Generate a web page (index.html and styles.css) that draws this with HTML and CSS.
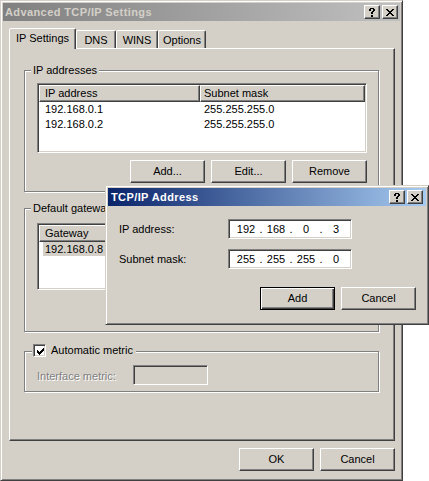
FILE: index.html
```html
<!DOCTYPE html>
<html>
<head>
<meta charset="utf-8">
<title>Advanced TCP/IP Settings</title>
<link rel="stylesheet" href="styles.css">
</head>
<body>
<div class="win main">
  <div class="titlebar inactive">
    <span class="title">Advanced TCP/IP Settings</span>
    <div class="tbtns">
      <span class="tbtn"><svg width="6" height="9" viewBox="0 0 6 9"><path d="M1 0h4v1H1z M0 1h2v2H0z M4 1h2v2H4z M3 3h2v1H3z M2 4h2v2H2z M2 7h2v2H2z"/></svg></span>
      <span class="tbtn"><svg width="8" height="7" viewBox="0 0 8 7"><path d="M0 0h2v1H0z M6 0h2v1H6z M1 1h2v1H1z M5 1h2v1H5z M2 2h4v1H2z M3 3h2v1H3z M2 4h4v1H2z M1 5h2v1H1z M5 5h2v1H5z M0 6h2v1H0z M6 6h2v1H6z"/></svg></span>
    </div>
  </div>

  <div class="tabs">
    <div class="tab active t-ip">IP Settings</div>
    <div class="tab t-dns">DNS</div>
    <div class="tab t-wins">WINS</div>
    <div class="tab t-opt">Options</div>
  </div>

  <div class="panel">
    <div class="group g1">
      <span class="glabel">IP addresses</span>
      <div class="list l1">
        <div class="lhead"><span class="hc c1">IP address</span><span class="hc c2">Subnet mask</span></div>
        <div class="row"><span class="c1">192.168.0.1</span><span class="c2">255.255.255.0</span></div>
        <div class="row"><span class="c1">192.168.0.2</span><span class="c2">255.255.255.0</span></div>
      </div>
      <div class="btnrow">
        <div class="btn">Add...</div>
        <div class="btn">Edit...</div>
        <div class="btn">Remove</div>
      </div>
    </div>

    <div class="group g2">
      <span class="glabel">Default gateways:</span>
      <div class="list l2">
        <div class="lhead"><span class="hc c1">Gateway</span><span class="hc c2"></span></div>
        <div class="row"><span class="c1"><span class="sel">192.168.0.8</span></span></div>
      </div>
    </div>

    <div class="group g3">
      <span class="glabel chklabel">
        <span class="chk"><svg width="7" height="7" viewBox="0 0 7 7"><path d="M6 0h1v1H6z M5 1h2v1H5z M0 2h1v1H0z M4 2h3v1H4z M0 3h2v1H0z M3 3h3v1H3z M0 4h5v1H0z M1 5h3v1H1z M2 6h1v1H2z"/></svg></span>
        <span>Automatic metric</span>
      </span>
      <div class="metric">
        <span class="disabled mlabel">Interface metric:</span>
        <span class="field dis"></span>
      </div>
    </div>
  </div>

  <div class="footer">
    <div class="btn">OK</div>
    <div class="btn">Cancel</div>
  </div>
</div>

<div class="win dialog">
  <div class="titlebar active-t">
    <span class="title">TCP/IP Address</span>
    <div class="tbtns">
      <span class="tbtn"><svg width="6" height="9" viewBox="0 0 6 9"><path d="M1 0h4v1H1z M0 1h2v2H0z M4 1h2v2H4z M3 3h2v1H3z M2 4h2v2H2z M2 7h2v2H2z"/></svg></span>
      <span class="tbtn"><svg width="8" height="7" viewBox="0 0 8 7"><path d="M0 0h2v1H0z M6 0h2v1H6z M1 1h2v1H1z M5 1h2v1H5z M2 2h4v1H2z M3 3h2v1H3z M2 4h4v1H2z M1 5h2v1H1z M5 5h2v1H5z M0 6h2v1H0z M6 6h2v1H6z"/></svg></span>
    </div>
  </div>
  <div class="dbody">
    <div class="frow">
      <span class="flabel">IP address:</span>
      <span class="field ip"><span class="seg">192</span><span class="dot">.</span><span class="seg">168</span><span class="dot">.</span><span class="seg">0</span><span class="dot">.</span><span class="seg">3</span></span>
    </div>
    <div class="frow r2">
      <span class="flabel">Subnet mask:</span>
      <span class="field ip"><span class="seg">255</span><span class="dot">.</span><span class="seg">255</span><span class="dot">.</span><span class="seg">255</span><span class="dot">.</span><span class="seg">0</span></span>
    </div>
    <div class="dbtns">
      <div class="btn default">Add</div>
      <div class="btn">Cancel</div>
    </div>
  </div>
</div>
</body>
</html>
```

FILE: styles.css
```css
* { box-sizing: border-box; }
html, body { margin: 0; padding: 0; }
body {
  background: #fff;
  width: 429px;
  height: 481px;
  overflow: hidden;
  position: relative;
  font-family: "Liberation Sans", Arial, sans-serif;
  font-size: 11px;
  color: #000;
}

/* window frame */
.win {
  background: #d4d0c8;
  border: 1px solid;
  border-color: #d4d0c8 #404040 #404040 #d4d0c8;
  box-shadow: inset 1px 1px #fff, inset -1px -1px #808080;
  padding: 2px;
  display: flex;
  flex-direction: column;
}
.main { width: 403px; height: 481px; }

.titlebar {
  height: 18px;
  flex: none;
  display: flex;
  align-items: center;
  justify-content: space-between;
  padding: 0 2px 0 2px;
}
.inactive { background: linear-gradient(to right, #808080, #c0c0c0); }
.active-t { background: linear-gradient(to right, #0a246a, #a6caf0); padding-left: 3px; padding-right: 3px; }
.title { font-weight: bold; letter-spacing: 0.4px; line-height: 18px; }
.inactive .title { color: #d4d0c8; }
.active-t .title { color: #fff; }
.tbtns { display: flex; gap: 2px; }
.tbtn {
  width: 16px;
  height: 14px;
  background: #d4d0c8;
  border: 1px solid;
  border-color: #fff #404040 #404040 #fff;
  box-shadow: inset -1px -1px #808080;
  display: flex;
  align-items: center;
  justify-content: center;
  padding-right: 1px;
}
.tbtn svg { display: block; fill: #000; }

/* tabs */
.tabs {
  display: flex;
  align-items: flex-end;
  height: 20px;
  margin-top: 7px;
  padding-left: 6px;
  flex: none;
}
.tab {
  height: 18px;
  background: #d4d0c8;
  border: 1px solid;
  border-bottom: none;
  border-color: #fff #404040 transparent #fff;
  border-radius: 2px 2px 0 0;
  box-shadow: inset -1px 0 #808080;
  display: flex;
  align-items: center;
  justify-content: center;
  line-height: 14px;
}
.tab.active {
  height: 21px;
  margin-bottom: -1px;
  position: relative;
  z-index: 1;
  padding-bottom: 3px;
}
.t-ip { width: 67px; }
.t-dns { width: 40px; }
.t-wins { width: 42px; }
.t-opt { width: 48px; }

/* panel */
.panel {
  margin-left: 6px;
  width: 386px;
  height: 393px;
  flex: none;
  border: 1px solid;
  border-color: #fff #404040 #404040 #fff;
  box-shadow: inset -1px -1px #808080;
  padding-left: 14px;
  display: flex;
  flex-direction: column;
}

/* group boxes */
.group {
  position: relative;
  width: 355px;
  flex: none;
  border: 1px solid #808080;
  box-shadow: 1px 1px #fff, inset 1px 1px #fff;
}
.glabel {
  position: absolute;
  top: -7px;
  left: 6px;
  padding: 0 2px;
  background: #d4d0c8;
  line-height: 13px;
  white-space: nowrap;
}
.g1 { margin-top: 21px; height: 122px; padding: 12px 11px 0 12px; }
.g2 { margin-top: 16px; height: 124px; padding: 14px 11px 0 12px; }
.g3 { margin-top: 19px; height: 41px; padding: 13px 0 0 12px; }

/* list view */
.list {
  background: #fff;
  border: 1px solid;
  border-color: #808080 #fff #fff #808080;
  box-shadow: inset 1px 1px #404040, inset -1px -1px #d4d0c8;
  padding: 1px;
  width: 330px;
  overflow: hidden;
}
.l1 { height: 70px; }
.l2 { height: 67px; }
.lhead { display: flex; height: 17px; }
.hc {
  display: block;
  height: 17px;
  background: #d4d0c8;
  border: 1px solid;
  border-color: #fff #404040 #404040 #fff;
  box-shadow: inset -1px -1px #808080;
  line-height: 14px;
}
.lhead .c1 { width: 161px; padding-left: 5px; }
.lhead .c2 { flex: 1; padding-left: 3px; }
.row { display: flex; height: 15px; line-height: 15px; }
.row .c1 { width: 161px; padding-left: 6px; }
.row .c2 { padding-left: 4px; }
.sel { background: #d4d0c8; display: inline-block; margin-left: -2px; padding: 0 2px; line-height: 14px; }

/* buttons */
.btnrow { display: flex; justify-content: flex-end; gap: 6px; margin-top: 7px; }
.btn {
  width: 75px;
  height: 23px;
  flex: none;
  background: #d4d0c8;
  border: 1px solid;
  border-color: #fff #404040 #404040 #fff;
  box-shadow: inset -1px -1px #808080;
  display: flex;
  align-items: center;
  justify-content: center;
  line-height: 13px;
}
.btn.default {
  border: 1px solid #000;
  box-shadow: inset 1px 1px #fff, inset -1px -1px #404040, inset -2px -2px #808080;
}

/* checkbox group */
.chklabel {
  display: flex;
  align-items: center;
  gap: 5px;
  left: 7px;
  top: -8px;
  padding: 0 3px 0 1px;
}
.chk {
  width: 13px;
  height: 13px;
  background: #fff;
  border: 1px solid;
  border-color: #808080 #fff #fff #808080;
  box-shadow: inset 1px 1px #404040, inset -1px -1px #d4d0c8;
  display: flex;
  align-items: center;
  justify-content: center;
  padding: 1px 0 0 1px;
}
.chk svg { display: block; fill: #000; }
.metric { display: flex; align-items: center; }
.mlabel { width: 96px; padding-top: 2px; }
.disabled { color: #808080; text-shadow: 1px 1px #fff; }

.field {
  display: block;
  height: 20px;
  border: 1px solid;
  border-color: #808080 #fff #fff #808080;
  box-shadow: inset 1px 1px #404040, inset -1px -1px #d4d0c8;
  background: #fff;
}
.field.dis { width: 75px; background: #d4d0c8; }

/* footer */
.footer {
  display: flex;
  justify-content: flex-end;
  gap: 6px;
  margin-top: 7px;
  padding-right: 5px;
}

/* dialog window */
.dialog {
  position: absolute;
  left: 105px;
  top: 185px;
  width: 324px;
  height: 140px;
}
.dbody { padding: 13px 10px 0 11px; display: flex; flex-direction: column; }
.frow { display: flex; align-items: center; }
.frow.r2 { margin-top: 10px; }
.flabel { width: 109px; }
.field.ip {
  width: 124px;
  display: flex;
  align-items: center;
  padding-left: 6px;
  line-height: 16px;
}
.seg { width: 22px; text-align: center; }
.dot { width: 8px; text-align: center; }
.dbtns { display: flex; justify-content: flex-end; gap: 6px; margin-top: 18px; }
```
